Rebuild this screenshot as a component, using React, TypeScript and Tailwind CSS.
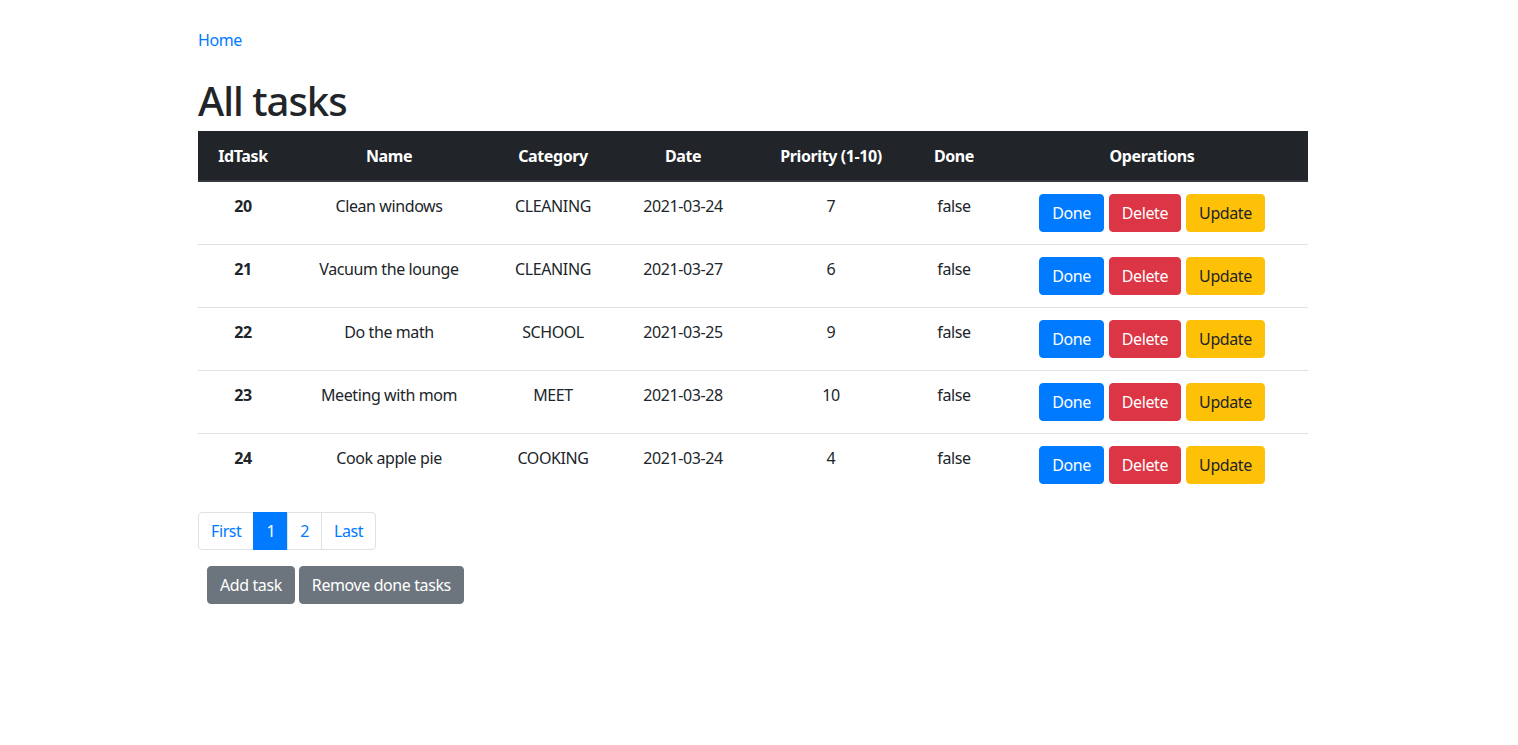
import React from "react";

type Task = {
  id: number;
  name: string;
  category: string;
  date: string;
  priority: number;
  done: boolean;
};

const tasks: Task[] = [
  { id: 20, name: "Clean windows", category: "CLEANING", date: "2021-03-24", priority: 7, done: false },
  { id: 21, name: "Vacuum the lounge", category: "CLEANING", date: "2021-03-27", priority: 6, done: false },
  { id: 22, name: "Do the math", category: "SCHOOL", date: "2021-03-25", priority: 9, done: false },
  { id: 23, name: "Meeting with mom", category: "MEET", date: "2021-03-28", priority: 10, done: false },
  { id: 24, name: "Cook apple pie", category: "COOKING", date: "2021-03-24", priority: 4, done: false },
];

const btn =
  "inline-block h-[38px] px-3 border rounded-[4px] text-base leading-6 align-top";

export default function App() {
  return (
    <div
      className="min-h-screen bg-white text-[#212529] text-base leading-6 tracking-[-0.4px]"
      style={{ fontFamily: '"Noto Sans", "Open Sans", sans-serif' }}
    >
      <div className="w-[1110px] ml-[198px] pt-[28px]">
        <a href="#" className="text-[#007bff]">
          Home
        </a>

        <h1 className="mt-[25px] mb-[6px] text-[40px] leading-[48px] font-medium tracking-[-1px]">
          All tasks
        </h1>

        <table className="w-full table-fixed border-collapse text-center mb-4">
          <colgroup>
            <col className="w-[90px]" />
            <col className="w-[202px]" />
            <col className="w-[126px]" />
            <col className="w-[134px]" />
            <col className="w-[162px]" />
            <col className="w-[84px]" />
            <col className="w-[312px]" />
          </colgroup>
          <thead>
            <tr className="bg-[#212529] text-white">
              {["IdTask", "Name", "Category", "Date", "Priority (1-10)", "Done", "Operations"].map((h) => (
                <th key={h} className="px-3 pt-[13px] pb-3 font-bold border-b-2 border-[#32383e]">
                  {h}
                </th>
              ))}
            </tr>
          </thead>
          <tbody>
            {tasks.map((t, i) => (
              <tr key={t.id} className={i > 0 ? "border-t border-[#dee2e6]" : ""}>
                <td className="p-3 align-top font-bold">{t.id}</td>
                <td className="p-3 align-top">{t.name}</td>
                <td className="p-3 align-top">{t.category}</td>
                <td className="p-3 align-top">{t.date}</td>
                <td className="p-3 align-top">{t.priority}</td>
                <td className="p-3 align-top">{String(t.done)}</td>
                <td className="p-3 align-top">
                  <div className="flex justify-center gap-[5px]">
                    <button className={`${btn} bg-[#007bff] border-[#007bff] text-white`}>Done</button>
                    <button className={`${btn} bg-[#dc3545] border-[#dc3545] text-white`}>Delete</button>
                    <button className={`${btn} bg-[#ffc107] border-[#ffc107] text-[#212529]`}>Update</button>
                  </div>
                </td>
              </tr>
            ))}
          </tbody>
        </table>

        <ul className="flex mb-4">
          <li>
            <a href="#" className="block h-[38px] px-3 py-2 leading-5 border border-[#dee2e6] rounded-l-[4px] text-[#007bff]">
              First
            </a>
          </li>
          <li>
            <a href="#" className="block h-[38px] px-3 py-2 leading-5 -ml-px border border-[#007bff] bg-[#007bff] text-white">
              1
            </a>
          </li>
          <li>
            <a href="#" className="block h-[38px] px-3 py-2 leading-5 -ml-px border border-[#dee2e6] text-[#007bff]">
              2
            </a>
          </li>
          <li>
            <a href="#" className="block h-[38px] px-3 py-2 leading-5 -ml-px border border-[#dee2e6] rounded-r-[4px] text-[#007bff]">
              Last
            </a>
          </li>
        </ul>

        <div className="flex gap-1 ml-[9px]">
          <button className={`${btn} bg-[#6c757d] border-[#6c757d] text-white`}>Add task</button>
          <button className={`${btn} bg-[#6c757d] border-[#6c757d] text-white`}>Remove done tasks</button>
        </div>
      </div>
    </div>
  );
}
